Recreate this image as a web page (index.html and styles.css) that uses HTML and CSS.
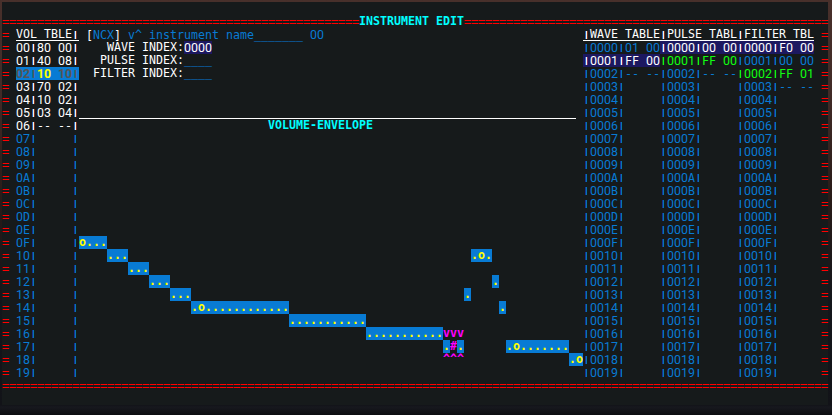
FILE: index.html
```html
<!DOCTYPE html>
<html lang="en">
<head>
<meta charset="utf-8">
<title>Instrument edit</title>
<link rel="stylesheet" href="styles.css">
</head>
<body>
<main class="terminal">
  <header class="rule"><span class="eq" data-n="51"></span><h1 class="title">INSTRUMENT EDIT</h1><span class="eq" data-n="52"></span></header>
  <div class="editor">
    <div class="side" data-side></div>
    <section class="vol" id="vol"></section>
    <section class="panel">
      <div class="info" id="info"></div>
      <h2 class="title env-title">VOLUME-ENVELOPE</h2>
      <div id="env"></div>
    </section>
    <section class="tables" id="tables"></section>
    <div class="side right" data-side></div>
  </div>
  <footer class="rule"><span class="eq" data-n="118"></span></footer>
</main>
<script src="app.js"></script>
</body>
</html>
```
FILE: styles.css
```css
* { box-sizing: border-box; }
body {
  margin: 0;
  width: 832px;
  height: 415px;
  padding: 2px 4px 10px 2px;
  overflow: hidden;
  background: linear-gradient(#48302b 0, #402a26 100px, #281b18 200px, #14161b 300px, #121318 405px, #17181e 407px, #0c0d10 415px);
}
.terminal {
  height: 403px;
  padding-top: 13px;
  background: #161a1b;
  color: #fff;
  font-family: "DejaVu Sans Mono", monospace;
  font-size: 11.63px;
  line-height: 13px;
}
.rule { display: flex; height: 13px; color: #f00; }
.editor { display: flex; height: 351px; }
.title { margin: 0; font-size: inherit; line-height: 13px; font-weight: bold; color: #0ff; white-space: pre; }
.rule .title { width: 105px; }
.eq, .side { font-family: "Liberation Mono", monospace; font-size: 12px; letter-spacing: -0.201px; text-shadow: 0 0 0 currentColor, 0 0 0 currentColor; line-height: 16px; }
.eq:first-child { min-width: 357px; }
.side { width: 14px; color: #f00; }
.right { margin-left: 7px; width: 7px; }
.vol { width: 63px; }
.panel { width: 504px; }
.tables { display: grid; grid-template-columns: repeat(3, 77px); }
.line { height: 13px; white-space: pre; }
.info { width: 497px; height: 91px; border-bottom: 1px solid #fff; }
.env-title { padding-left: 189px; }
.row { display: grid; grid-template-columns: repeat(72, 7px); grid-template-rows: 13px; height: 13px; }
.head { border-bottom: 1px solid #fff; }
.blue { color: #087bd4; }
.green { color: #1f1; }
.navy { background: #1c1860; }
.selected { background: #087bd4; color: #555; font-weight: bold; }
.yellow { color: #ff0; }
.magenta { color: #f0f; font-weight: bold; }
.bar { background: #087bd4; color: #ff0; font-weight: bold; }
.info .navy { display: inline-block; height: 13px; vertical-align: top; }
.d { display: inline-block; line-height: 13px; font-family: Roboto, sans-serif; font-size: 12.4px; letter-spacing: 0.037px; }
.selected .d { letter-spacing: -0.13px; }
.p { display: inline-block; width: 7px; height: 13px; vertical-align: top; text-align: center; font-family: Roboto, sans-serif; font-size: 9.5px; line-height: 13px; text-shadow: 0 0 0 currentColor, 0 0 0 currentColor; }
```
FILE: app.js
```js
const markup = text => text.replace(/[0-9]+|\|/g, m =>
  m === '|' ? '<span class="p">|</span>' : `<span class="d" style="width:${m.length * 7}px">${m}</span>`);
const span = (cls, text) => `<span class="${cls}">${markup(text)}</span>`;
const line = (html, cls = '') => `<div class="line ${cls}">${html}</div>`;
const hex = (n, w) => n.toString(16).toUpperCase().padStart(w, '0');

document.querySelectorAll('.eq').forEach(e => { e.textContent = '='.repeat(e.dataset.n); });
document.querySelectorAll('[data-side]').forEach(e => { e.innerHTML = line('=').repeat(27); });

const volume = ['80 00', '40 08', '10 10', '70 02', '10 02', '03 04', '-- --'];
let vol = line(markup('VOL TBLE|'), 'head');
for (let i = 0; i < 26; i++) {
  if (i === 2) vol += line(markup('02|') + span('yellow', '10') + markup(' 10|'), 'selected');
  else vol += line(markup(`${hex(i, 2)}|${volume[i] || '     '}|`), i > 6 ? 'blue' : '');
}
document.getElementById('vol').innerHTML = vol;

document.getElementById('info').innerHTML =
  line(' [' + span('blue', 'NCX') + '] ' + span('blue', 'v^ instrument name_______ 00')) +
  line('    WAVE INDEX:' + span('navy', '0000')) +
  line('   PULSE INDEX:' + span('blue', '____')) +
  line('  FILTER INDEX:' + span('blue', '____'));

const tables = [
  ['|WAVE TABLE', ['01 00', 'FF 00', '-- --'], ['blue', 'navy']],
  ['|PULSE TABL', ['00 00', 'FF 00', '-- --'], ['navy', 'green']],
  ['|FILTER TBL', ['F0 00', '00 00', 'FF 01', '-- --'], ['navy', 'blue', 'green']]
];
document.getElementById('tables').innerHTML = tables.map(([name, values, styles]) => {
  let out = line(markup(name), 'head');
  for (let i = 0; i < 26; i++) out += line(markup(`|${hex(i, 4)}|${values[i] || ''}`), styles[i] || 'blue');
  return `<div>${out}</div>`;
}).join('');

// Each envelope row lists [column, class, characters].
const envelope = {
  15: [[0, 'bar', 'o...']],
  16: [[4, 'bar', '...'], [56, 'bar', '.o.']],
  17: [[7, 'bar', '...']],
  18: [[10, 'bar', '...'], [59, 'bar', '.']],
  19: [[13, 'bar', '...'], [55, 'bar', '.']],
  20: [[16, 'bar', '.o............'], [60, 'bar', '.']],
  21: [[30, 'bar', '...........']],
  22: [[41, 'bar', '...........'], [52, 'magenta', 'vvv']],
  23: [[52, 'bar', '.'], [53, 'magenta', '#'], [54, 'bar', '.'], [61, 'bar', '.o.......']],
  24: [[52, 'magenta', '^^^'], [70, 'bar', '.o']]
};
let env = '';
for (let i = 7; i < 26; i++) {
  const cells = (envelope[i] || []).map(([start, cls, chars]) =>
    `<span class="${cls}" style="grid-column:${start + 1} / span ${chars.length}">${chars}</span>`);
  env += `<div class="row">${cells.join('')}</div>`;
}
document.getElementById('env').innerHTML = env;
```
